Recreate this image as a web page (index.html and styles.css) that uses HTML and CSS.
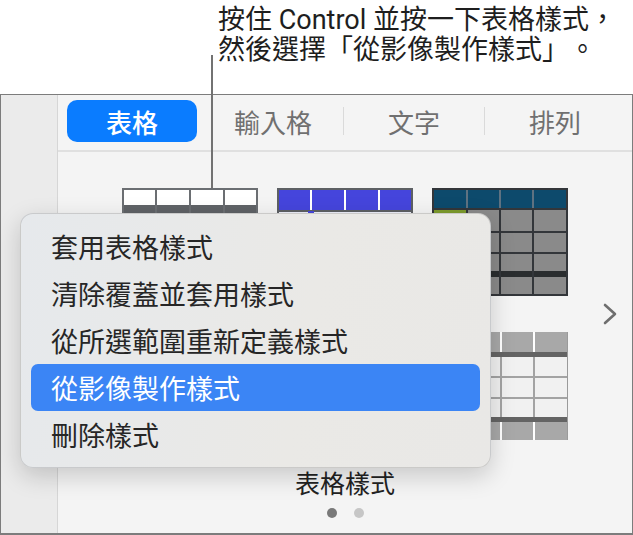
FILE: index.html
```html
<!DOCTYPE html>
<html lang="zh-Hant">
<head>
    <meta charset="UTF-8">
    <title>表格樣式</title>
    <link rel="stylesheet" href="styles.css">
</head>
<body>
    <div class="callout">按住 Control 並按一下表格樣式，<br>然後選擇「從影像製作樣式」。</div>
    <div class="leader"></div>

    <div class="panel">
        <div class="sidebar"></div>
        <div class="main">
            <div class="tabs">
                <div class="tab active">表格</div>
                <div class="tab">輸入格</div>
                <span class="divider"></span>
                <div class="tab">文字</div>
                <span class="divider"></span>
                <div class="tab">排列</div>
            </div>

            <div class="styles">
                <div class="grid">
                    <!-- plain -->
                    <svg class="thumb" viewBox="0 0 136 108">
                        <rect width="136" height="108" fill="#fff"/>
                        <rect x="0" y="17" width="136" height="8" fill="#5f6266"/>
                        <rect x="0" y="45" width="136" height="2" fill="#6b6e72"/>
                        <rect x="0" y="66" width="136" height="2" fill="#6b6e72"/>
                        <rect x="0" y="86" width="136" height="2" fill="#6b6e72"/>
                        <rect x="33" y="0" width="2" height="108" fill="#6b6e72"/>
                        <rect x="67" y="0" width="2" height="108" fill="#6b6e72"/>
                        <rect x="101" y="0" width="2" height="108" fill="#6b6e72"/>
                        <rect x="1" y="1" width="134" height="106" fill="none" stroke="#6b6e72" stroke-width="2"/>
                    </svg>
                    <!-- blue -->
                    <svg class="thumb" viewBox="0 0 136 108">
                        <rect width="136" height="108" fill="#eef0fb"/>
                        <rect x="0" y="0" width="136" height="22" fill="#4545dc"/>
                        <rect x="33" y="2" width="2" height="20" fill="#fff"/>
                        <rect x="67" y="2" width="2" height="20" fill="#fff"/>
                        <rect x="101" y="2" width="2" height="20" fill="#fff"/>
                        <rect x="0" y="22" width="136" height="2" fill="#5d6064"/>
                        <rect x="31" y="23" width="6" height="3" fill="#4545dc"/>
                        <rect x="1" y="1" width="134" height="106" fill="none" stroke="#5d6064" stroke-width="2"/>
                    </svg>
                    <!-- dark -->
                    <svg class="thumb" viewBox="0 0 136 108">
                        <rect width="136" height="108" fill="#8a8a8a"/>
                        <rect x="0" y="0" width="136" height="21" fill="#0d4a6c"/>
                        <rect x="2" y="22" width="32" height="21" fill="#7d9b2d"/>
                        <rect x="34" y="2" width="2" height="19" fill="#5f7281"/>
                        <rect x="67" y="2" width="2" height="19" fill="#5f7281"/>
                        <rect x="100" y="2" width="2" height="19" fill="#5f7281"/>
                        <rect x="0" y="20" width="136" height="2" fill="#33363a"/>
                        <rect x="0" y="43" width="136" height="2" fill="#33363a"/>
                        <rect x="0" y="64" width="136" height="2" fill="#33363a"/>
                        <rect x="0" y="83" width="136" height="6" fill="#2a2d2f"/>
                        <rect x="34" y="21" width="2" height="87" fill="#33363a"/>
                        <rect x="67" y="21" width="2" height="87" fill="#33363a"/>
                        <rect x="100" y="21" width="2" height="87" fill="#33363a"/>
                        <rect x="1" y="1" width="134" height="106" fill="none" stroke="#33363a" stroke-width="2"/>
                    </svg>
                    <!-- row two -->
                    <svg class="thumb" viewBox="0 0 136 108">
                        <rect width="136" height="108" fill="#fff"/>
                        <rect x="0" y="0" width="136" height="20" fill="#e1e1e1"/>
                        <rect x="1" y="1" width="134" height="106" fill="none" stroke="#9c9c9c" stroke-width="2"/>
                    </svg>
                    <svg class="thumb" viewBox="0 0 136 108">
                        <rect width="136" height="108" fill="#f1f1f1"/>
                        <rect x="0" y="0" width="136" height="20" fill="#7a7a7a"/>
                        <rect x="1" y="1" width="134" height="106" fill="none" stroke="#7a7a7a" stroke-width="2"/>
                    </svg>
                    <!-- gray bands -->
                    <svg class="thumb" viewBox="0 0 136 108">
                        <rect width="136" height="108" fill="#f1f1f1"/>
                        <rect x="0" y="0" width="136" height="20" fill="#a8a8a8"/>
                        <rect x="0" y="90" width="136" height="18" fill="#a8a8a8"/>
                        <rect x="0" y="20" width="136" height="5" fill="#646464"/>
                        <rect x="0" y="85" width="136" height="5" fill="#646464"/>
                        <rect x="0" y="44" width="136" height="2" fill="#a3a3a3"/>
                        <rect x="0" y="65" width="136" height="2" fill="#a3a3a3"/>
                        <rect x="34" y="0" width="2" height="20" fill="#fff"/>
                        <rect x="68" y="0" width="2" height="20" fill="#fff"/>
                        <rect x="101" y="0" width="2" height="20" fill="#fff"/>
                        <rect x="34" y="90" width="2" height="18" fill="#fff"/>
                        <rect x="68" y="90" width="2" height="18" fill="#fff"/>
                        <rect x="101" y="90" width="2" height="18" fill="#fff"/>
                        <rect x="34" y="25" width="2" height="60" fill="#a3a3a3"/>
                        <rect x="68" y="25" width="2" height="60" fill="#a3a3a3"/>
                        <rect x="101" y="25" width="2" height="60" fill="#a3a3a3"/>
                        <rect x="135" y="0" width="1" height="108" fill="#9a9a9a"/>
                    </svg>
                </div>
                <svg class="next" viewBox="0 0 14 22" width="14" height="22">
                    <polyline points="2,2 12,11 2,20" fill="none" stroke="#6e6e6e" stroke-width="2.6" stroke-linecap="round" stroke-linejoin="round"/>
                </svg>
            </div>

            <div class="caption">表格樣式</div>
            <div class="dots">
                <span class="dot on"></span>
                <span class="dot"></span>
            </div>
        </div>
    </div>

    <ul class="menu">
        <li>套用表格樣式</li>
        <li>清除覆蓋並套用樣式</li>
        <li>從所選範圍重新定義樣式</li>
        <li class="selected">從影像製作樣式</li>
        <li>刪除樣式</li>
    </ul>
</body>
</html>
```

FILE: styles.css
```css
/* Page */
body {
    margin: 0;
    width: 633px;
    height: 535px;
    overflow: hidden;
    position: relative;
    background-color: #fff;
    color: #222;
    font-family: "Roboto", "Noto Sans CJK TC", sans-serif;
}

/* Callout text above the inspector */
.callout {
    padding: 5px 0 0 218px;
    height: 60px;
    margin-bottom: 29px;
    font-size: 27px;
    line-height: 30px;
    color: #1e1e1e;
    white-space: nowrap;
    text-spacing-trim: space-all;
}

.leader {
    position: absolute;
    left: 211px;
    top: 55px;
    width: 2px;
    height: 133px;
    background-color: #727272;
    z-index: 2;
}

/* Inspector panel */
.panel {
    display: flex;
    box-sizing: border-box;
    width: 633px;
    height: 441px;
    border: 1px solid #7c7c7c;
    border-bottom-width: 2px;
    background-color: #f4f4f4;
}

.sidebar {
    width: 56px;
    flex-shrink: 0;
    background-color: #ebebeb;
    border-right: 1px solid #d6d6d6;
}

.main {
    flex: 1;
    display: flex;
    flex-direction: column;
}

/* Tab bar */
.tabs {
    display: flex;
    align-items: center;
    padding: 5px 0 8px 4px;
    border-bottom: 2px solid #e0e0e0;
}

.tab {
    width: 140px;
    height: 42px;
    display: flex;
    align-items: center;
    justify-content: center;
    font-size: 26px;
    color: #707070;
}

.tab.active {
    width: 130px;
    margin: 0 6px 0 5px;
    border-radius: 10px;
    background-color: #0a7cff;
    color: #fff;
    font-weight: 500;
}

.divider {
    width: 1px;
    height: 28px;
    background-color: #dadada;
}

/* Style thumbnails */
.styles {
    display: grid;
    grid-template-columns: 1fr auto 1fr;
    margin-top: 36px;
}

.grid {
    grid-column: 2;
    display: grid;
    grid-template-columns: repeat(3, 136px);
    grid-auto-rows: 108px;
    gap: 36px 19px;
}

.thumb {
    width: 136px;
    height: 108px;
    display: block;
}

.next {
    grid-column: 3;
    justify-self: end;
    align-self: center;
    margin-right: 15px;
}

.caption {
    margin-top: 30px;
    text-align: center;
    font-size: 25px;
    line-height: 30px;
    color: #222;
}

.dots {
    display: flex;
    justify-content: center;
    gap: 17px;
    margin-top: 8px;
}

.dot {
    width: 10px;
    height: 10px;
    border-radius: 50%;
    background-color: #c6c6c6;
}

.dot.on {
    background-color: #797979;
}

/* Context menu */
.menu {
    position: absolute;
    left: 20px;
    top: 213px;
    width: 471px;
    box-sizing: border-box;
    margin: 0;
    padding: 9px 10px;
    list-style: none;
    border: 1px solid rgba(0, 0, 0, 0.13);
    border-radius: 13px;
    background: linear-gradient(100deg, #e6e9ec 0%, #eae9e6 60%, #e9e8e6 100%);
    box-shadow: 0 8px 24px rgba(0, 0, 0, 0.18);
    z-index: 3;
}

.menu li {
    height: 47px;
    display: flex;
    align-items: center;
    padding-left: 20px;
    border-radius: 7px;
    font-size: 27px;
    color: #262626;
}

.menu li.selected {
    background-color: #3b85f5;
    color: #fff;
}
```
